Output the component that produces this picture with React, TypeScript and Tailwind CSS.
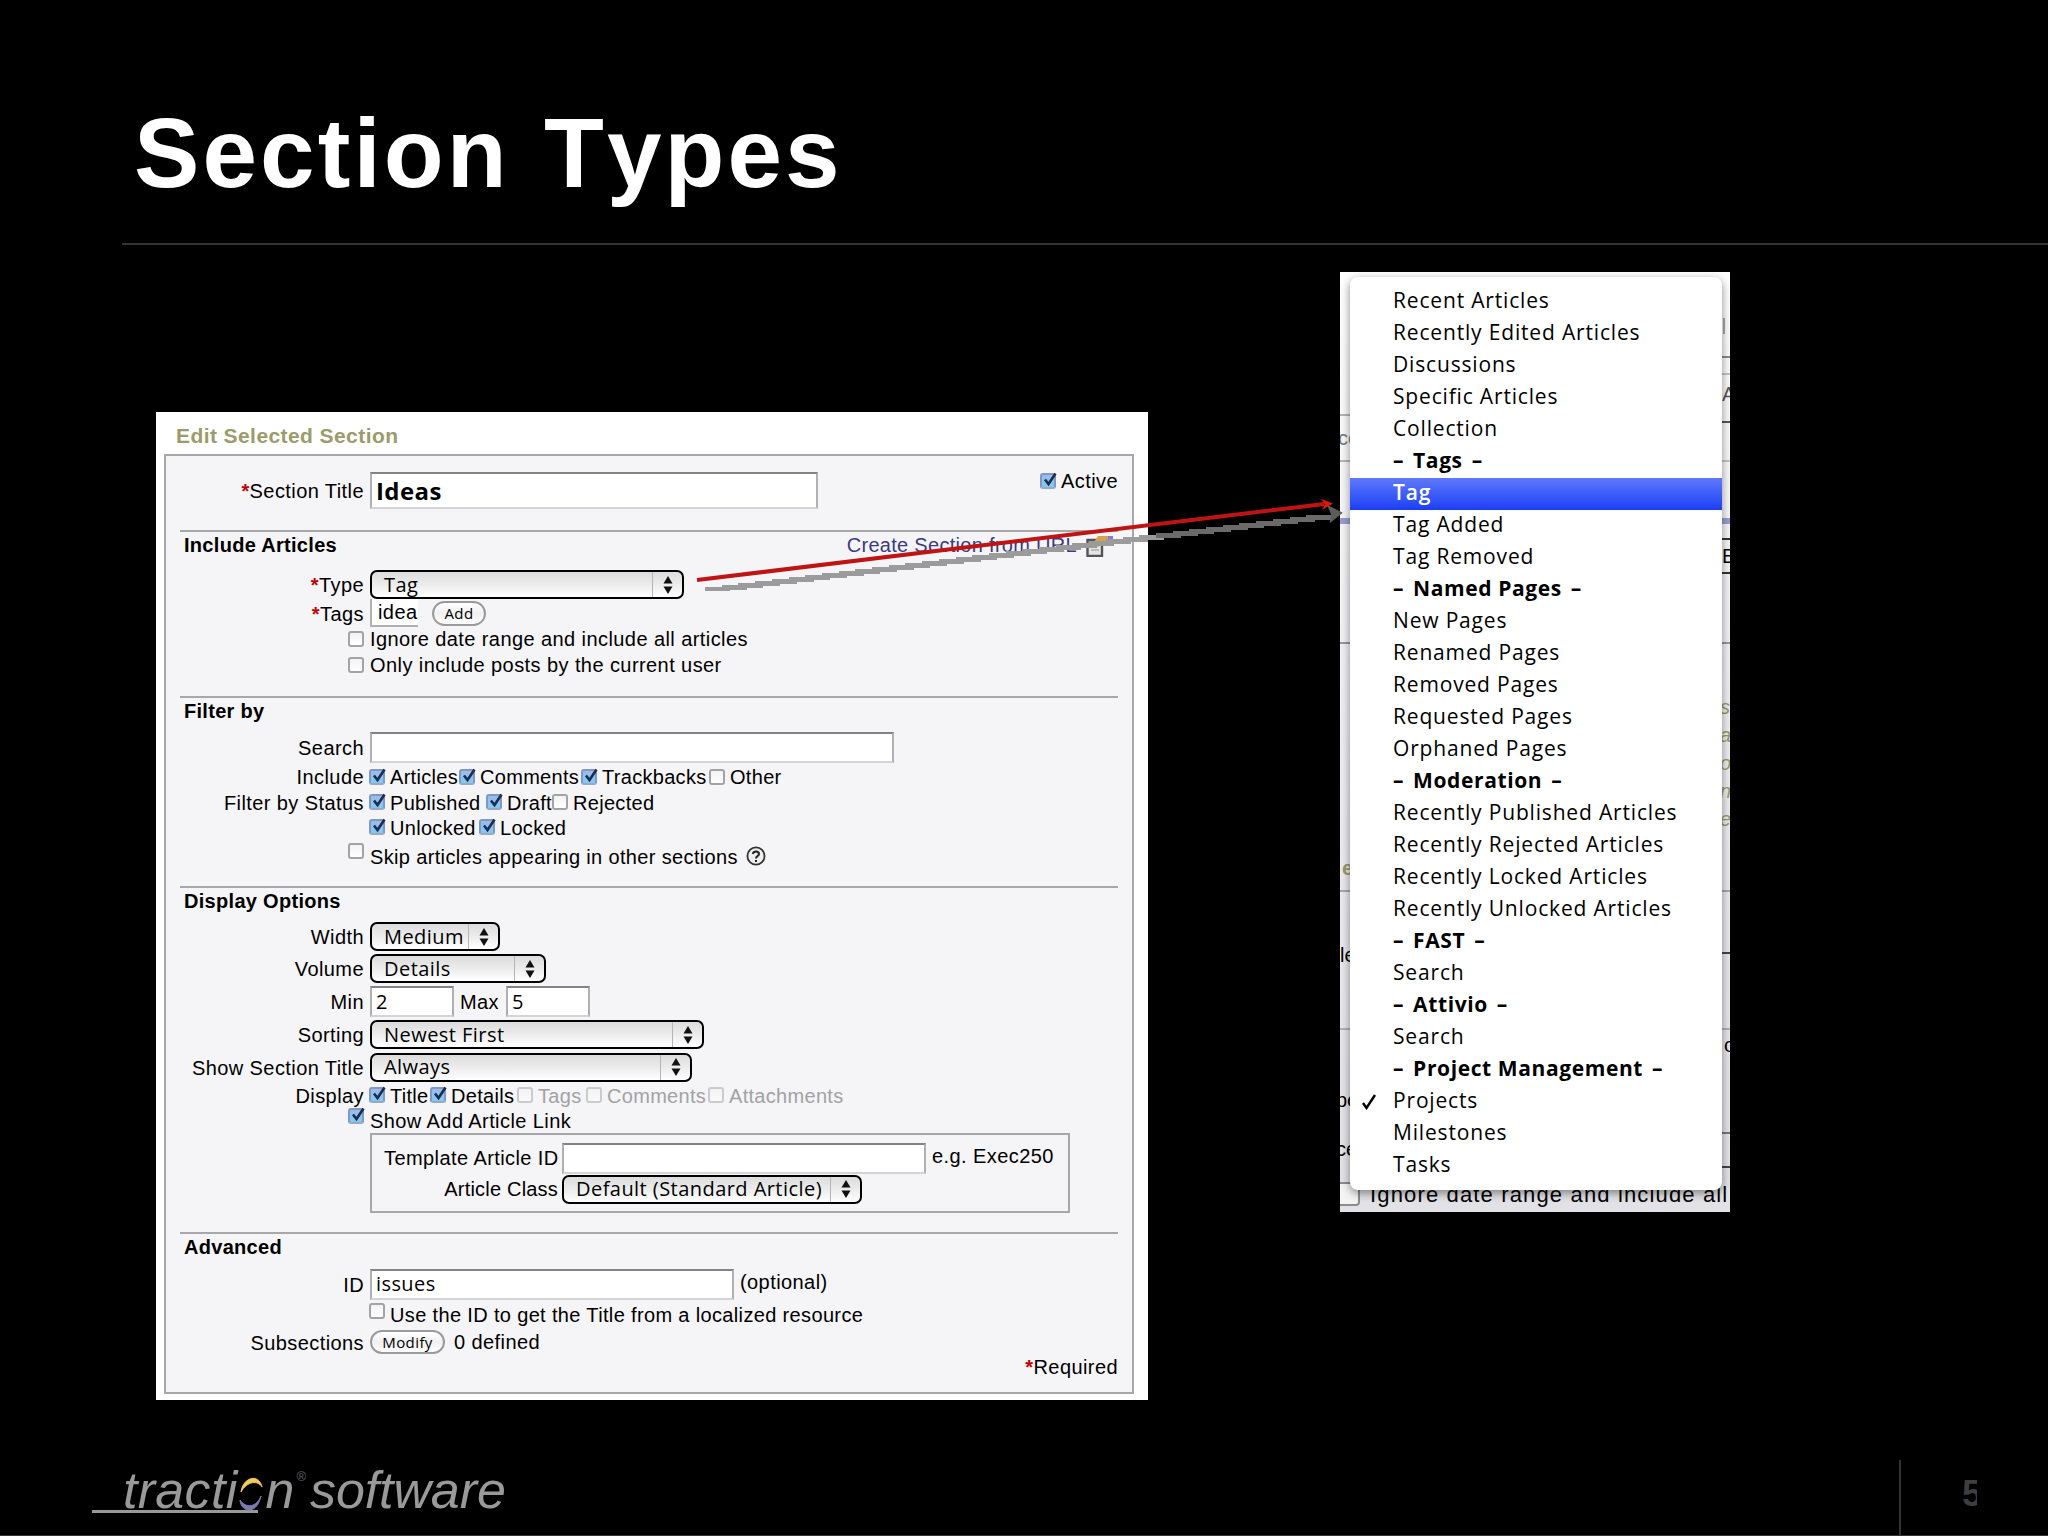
import type { ReactNode } from 'react';
import { clsx } from 'clsx';

type MenuItem = { label: string; heading?: boolean; selected?: boolean; checked?: boolean };

const menuItems: MenuItem[] = [
  { label: 'Recent Articles' },
  { label: 'Recently Edited Articles' },
  { label: 'Discussions' },
  { label: 'Specific Articles' },
  { label: 'Collection' },
  { label: 'Tags', heading: true },
  { label: 'Tag', selected: true },
  { label: 'Tag Added' },
  { label: 'Tag Removed' },
  { label: 'Named Pages', heading: true },
  { label: 'New Pages' },
  { label: 'Renamed Pages' },
  { label: 'Removed Pages' },
  { label: 'Requested Pages' },
  { label: 'Orphaned Pages' },
  { label: 'Moderation', heading: true },
  { label: 'Recently Published Articles' },
  { label: 'Recently Rejected Articles' },
  { label: 'Recently Locked Articles' },
  { label: 'Recently Unlocked Articles' },
  { label: 'FAST', heading: true },
  { label: 'Search' },
  { label: 'Attivio', heading: true },
  { label: 'Search' },
  { label: 'Project Management', heading: true },
  { label: 'Projects', checked: true },
  { label: 'Milestones' },
  { label: 'Tasks' },
];

function Checkbox({ checked, dim, className }: { checked?: boolean; dim?: boolean; className?: string }) {
  return (
    <span
      className={clsx(
        'relative block size-[16px] shrink-0 rounded-[3px] border-2',
        checked
          ? 'border-[#8197c4] border-b-[#9aa9bd] bg-linear-to-b from-[#9dbbe8] to-[#7ccbf8]'
          : 'border-[#a3a3a5] bg-linear-to-b from-[#f2f2f2] to-white',
        dim && 'opacity-50',
        className
      )}
    >
      {checked && (
        <svg viewBox="0 0 18 18" className="absolute -top-[4px] -left-[2px] size-[18px]">
          <path d="M5 8.5 L8.5 13 L15.5 2.5" fill="none" stroke="#1b2c4c" strokeWidth="2.6" />
        </svg>
      )}
    </span>
  );
}

function Check({
  label,
  checked,
  dim,
  className,
}: {
  label: string;
  checked?: boolean;
  dim?: boolean;
  className?: string;
}) {
  return (
    <span className={clsx('-ml-px flex shrink-0 items-center gap-[5px] tracking-[0.3px]', className)}>
      <Checkbox checked={checked} dim={dim} />
      <span className={clsx('mt-[2px]', dim && 'text-[#a2a2a4]')}>{label}</span>
    </span>
  );
}

function Select({ value, className }: { value: string; className?: string }) {
  return (
    <span
      className={clsx(
        'flex shrink-0 items-center rounded-[7px] border-2 border-black bg-linear-to-b from-[#dcdcdc] via-[#ececec] to-white font-["Open_Sans",sans-serif] text-[20px] leading-none tracking-[0.45px]',
        className
      )}
    >
      <span className="flex-1 pl-[12px]">{value}</span>
      <span className="flex h-full w-[30px] items-center justify-center border-l border-[#b5b5b5]">
        <svg viewBox="0 0 10 18" className="h-[18px] w-[10px]">
          <path d="M5 0 L9.5 7.5 H0.5 Z M5 18 L9.5 10.5 H0.5 Z" fill="#111" />
        </svg>
      </span>
    </span>
  );
}

function Field({ value, className }: { value?: string; className?: string }) {
  return (
    <span
      className={clsx(
        'flex shrink-0 items-center border-2 border-t-[#838385] border-r-[#b0b0b2] border-b-[#d4d4d6] border-l-[#b0b0b2] bg-white pl-[4px] font-["Open_Sans",sans-serif] leading-none',
        className
      )}
    >
      {value}
    </span>
  );
}

function Button({ label, className }: { label: string; className?: string }) {
  return (
    <span
      className={clsx(
        'flex shrink-0 items-center justify-center rounded-full border-2 border-[#9a9a9c] bg-linear-to-b from-white via-[#f0f0f0] to-white font-["Open_Sans",sans-serif] text-[15px] leading-none font-medium',
        className
      )}
    >
      {label}
    </span>
  );
}

function Row({
  label,
  required,
  className,
  children,
}: {
  label?: ReactNode;
  required?: boolean;
  className?: string;
  children?: ReactNode;
}) {
  return (
    <div className={clsx('flex items-center', className)}>
      <div className={clsx('mr-[6px] flex w-[184px] shrink-0 justify-end', typeof label === 'string' && 'mt-[2px]')}>
        {required && <Star />}
        {label}
      </div>
      {children}
    </div>
  );
}

function Star() {
  return <span className="font-bold text-[#c00000]">*</span>;
}

function Group({ title, extra, className, children }: { title: string; extra?: ReactNode; className?: string; children: ReactNode }) {
  return (
    <div className={clsx('border-t-2 border-[#a8a8aa]', className)}>
      <div className="flex h-[26px] items-center justify-between pl-1 font-bold tracking-[0.3px]">
        {title}
        {extra}
      </div>
      {children}
    </div>
  );
}

function LinkIcon() {
  return (
    <svg viewBox="0 0 32 24" className="h-[24px] w-[32px]">
      <path d="M1.500 7 H16 V23 H1.500 Z" fill="#e4e4e4" stroke="#555" strokeWidth="2.4" />
      <path d="M5 13 H13 M5 17 H13" stroke="#bbb" strokeWidth="2" />
      <path d="M8 9 L12 3 H22 V11 H16 L13 13 Z" fill="#d6a250" />
      <path d="M22 3 H27 V12 H22 Z" fill="#8c78d8" />
    </svg>
  );
}

function EditSection() {
  return (
    <section className="mt-[167px] ml-[156px] flex h-[988px] w-[992px] flex-col bg-white pr-[14px] pl-[8px] text-[20px] leading-[23px] tracking-[0.42px] whitespace-nowrap text-black">
      <h2 className="flex h-[42px] items-end pb-[7px] pl-[12px] text-[21px] leading-[23px] font-bold text-[#9b9b6b]">
        Edit Selected Section
      </h2>
      <div className="h-[940px] border-2 border-[#a8a8aa] bg-[#f5f4f6] px-[14px]">
        <Row label="Section Title" required className="h-[69px]">
          <Field value="Ideas" className="h-[37px] w-[448px] text-[24px] font-bold" />
          <span className="-mt-[20px] ml-auto flex items-center gap-[5px]">
            <Checkbox checked />
            <span className="mt-[2px]">Active</span>
          </span>
        </Row>

        <Group
          title="Include Articles"
          className="mt-[5px]"
          extra={
            <span className="flex items-center gap-[9px] font-normal text-[#3a3a85]">
              Create Section from URL
              <LinkIcon />
            </span>
          }
        >
          <Row label="Type" required className="mt-[12px] h-[29px]">
            <Select value="Tag" className="h-[29px] w-[314px]" />
          </Row>
          <Row label="Tags" required className="h-[28px]">
            <span className="flex h-[28px] w-[48px] items-center border-b-2 border-l-2 border-[#b0b0b2] bg-white pl-[6px]">
              idea
            </span>
            <Button label="Add" className="ml-[14px] h-[25px] w-[54px]" />
          </Row>
          <Row label={<Checkbox />} className="h-[24px]">
            <span className="mt-px">Ignore date range and include all articles</span>
          </Row>
          <Row label={<Checkbox />} className="h-[27px]">
            <span className="mt-[2px]">Only include posts by the current user</span>
          </Row>
        </Group>

        <Group title="Filter by" className="mt-[18px]">
          <Row label="Search" className="mt-[8px] h-[31px]">
            <Field className="h-[31px] w-[524px]" />
          </Row>
          <Row label="Include" className="h-[27px]">
            <Check label="Articles" checked className="w-[91px]" />
            <Check label="Comments" checked className="w-[123px]" />
            <Check label="Trackbacks" checked className="w-[129px]" />
            <Check label="Other" />
          </Row>
          <Row label="Filter by Status" className="h-[24px]">
            <Check label="Published" checked className="w-[118px]" />
            <Check label="Draft" checked className="w-[67px]" />
            <Check label="Rejected" />
          </Row>
          <Row className="h-[26px]">
            <Check label="Unlocked" checked className="w-[111px]" />
            <Check label="Locked" checked />
          </Row>
          <Row label={<Checkbox className="-mt-[10px]" />} className="h-[32px]">
            <span className="mt-[2px] tracking-[0.35px]">Skip articles appearing in other sections</span>
            <svg viewBox="0 0 20 20" className="ml-[8px] size-[20px]">
              <circle cx="10" cy="10" r="8.6" fill="#eee" stroke="#333" strokeWidth="1.8" />
              <path d="M7 8 C7 4.5 13 4.5 13 8 C13 10 10 10 10 12.5 M10 14 V16" fill="none" stroke="#222" strokeWidth="2" />
            </svg>
          </Row>
        </Group>

        <Group title="Display Options" className="mt-[14px]">
          <Row label="Width" className="mt-[8px] h-[29px]">
            <Select value="Medium" className="h-[29px] w-[130px]" />
          </Row>
          <Row label="Volume" className="mt-[3px] h-[29px]">
            <Select value="Details" className="h-[29px] w-[176px]" />
          </Row>
          <Row label="Min" className="mt-[3px] h-[31px]">
            <Field value="2" className="h-[31px] w-[84px] text-[20px]" />
            <span className="mt-[2px] mr-[7px] ml-[6px]">Max</span>
            <Field value="5" className="h-[31px] w-[84px] text-[20px]" />
          </Row>
          <Row label="Sorting" className="mt-[3px] h-[29px]">
            <Select value="Newest First" className="h-[29px] w-[334px]" />
          </Row>
          <Row label="Show Section Title" className="mt-[3px] h-[30px]">
            <Select value="Always" className="h-[29px] w-[322px]" />
          </Row>
          <Row label="Display" className="h-[26px]">
            <Check label="Title" checked className="w-[62px]" />
            <Check label="Details" checked className="w-[88px]" />
            <Check label="Tags" dim className="w-[70px]" />
            <Check label="Comments" dim className="w-[123px]" />
            <Check label="Attachments" dim />
          </Row>
          <Row label={<Checkbox checked className="-mt-[9px]" />} className="h-[24px]">
            <span className="mt-[2px]">Show Add Article Link</span>
          </Row>
          <div className="mt-[1px] ml-[190px] h-[80px] w-[700px] border-2 border-[#a8a8aa] pt-[8px] pl-[12px]">
            <div className="flex h-[31px] items-center">
              <span className="mr-[4px] w-[174px] text-right">Template Article ID</span>
              <Field className="h-[31px] w-[364px]" />
              <span className="-mt-[5px] ml-[6px]">e.g. Exec250</span>
            </div>
            <div className="flex h-[30px] items-center">
              <span className="mr-[4px] w-[174px] text-right tracking-[0.2px]">Article Class</span>
              <Select value="Default (Standard Article)" className="h-[29px] w-[300px]" />
            </div>
          </div>
        </Group>

        <Group title="Advanced" className="mt-[19px]">
          <Row label="ID" className="mt-[9px] h-[30px]">
            <Field value="issues" className="h-[31px] w-[364px] text-[20px]" />
            <span className="-mt-[3px] ml-[6px]">(optional)</span>
          </Row>
          <Row className="h-[31px]">
            <Checkbox className="-mt-[8px] -ml-px" />
            <span className="mt-[2px] ml-[5px] tracking-[0.35px]">
              Use the ID to get the Title from a localized resource
            </span>
          </Row>
          <Row label="Subsections" className="h-[24px]">
            <Button label="Modify" className="h-[24px] w-[75px]" />
            <span className="ml-[9px]">0 defined</span>
          </Row>
          <div className="flex h-[26px] items-center justify-end">
            <Star />
            Required
          </div>
        </Group>
      </div>
    </section>
  );
}

// bits of the page that stay visible around the open menu
function PageBehindMenu() {
  return (
    <div className="absolute inset-0 bg-linear-to-b from-white via-[#eeedf1] to-[#e2e2e6] text-[20px] leading-[23px] whitespace-nowrap text-black">
      <span className="absolute top-[142px] left-0 h-[2px] w-[10px] bg-[#b5b5b8]" />
      <span className="absolute top-[155px] -left-[2px] text-[#777]">ce</span>
      <span className="absolute top-[188px] left-0 h-[2px] w-[10px] bg-[#b5b5b8]" />
      <span className="absolute top-[246px] left-0 h-[6px] w-full bg-[#9c9cd0]" />
      <span className="absolute top-[370px] left-0 h-[2px] w-full bg-[#98989a]" />
      <span className="absolute top-[585px] left-[2px] font-bold text-[#9b9b6b]">e</span>
      <span className="absolute top-[618px] left-0 h-[2px] w-full bg-[#a8a8aa]" />
      <span className="absolute top-[672px] left-0">le</span>
      <span className="absolute top-[756px] left-0 h-[2px] w-full bg-[#b0b0b2]" />
      <span className="absolute top-[817px] -left-[4px]">pe</span>
      <span className="absolute top-[866px] -left-[4px]">ce</span>
      <span className="absolute top-[910px] -left-[4px] h-[24px] w-[24px] rounded-[4px] border-2 border-[#8d8d8f] bg-[#f4f4f4]" />

      <span className="absolute top-[46px] right-[5px] h-[16px] w-[2px] bg-[#aaa]" />
      <span className="absolute top-[84px] right-0 h-[2px] w-[8px] bg-[#8a8a8c]" />
      <span className="absolute top-[101px] right-0 h-[2px] w-[8px] bg-[#c4c4c6]" />
      <span className="absolute top-[111px] left-[382px] text-[#555]">A</span>
      <span className="absolute top-[149px] right-0 h-[2px] w-[8px] bg-[#555]" />
      <span className="absolute top-[188px] right-0 h-[2px] w-[8px] bg-[#c4c4c6]" />
      <span className="absolute top-[266px] right-0 h-[2px] w-[8px] bg-[#333]" />
      <span className="absolute top-[273px] left-[382px]">E</span>
      <span className="absolute top-[300px] right-0 h-[2px] w-[8px] bg-[#333]" />
      <span className="absolute top-[424px] left-[380px] text-[#9b9b6b] italic">s</span>
      <span className="absolute top-[452px] left-[380px] text-[#9b9b6b] italic">a</span>
      <span className="absolute top-[480px] left-[380px] text-[#9b9b6b] italic">o</span>
      <span className="absolute top-[508px] left-[380px] text-[#9b9b6b] italic">n</span>
      <span className="absolute top-[536px] left-[380px] text-[#9b9b6b] italic">e</span>
      <span className="absolute top-[680px] right-0 h-[2px] w-[8px] bg-[#444]" />
      <span className="absolute top-[762px] left-[384px]">o</span>
      <span className="absolute top-[860px] right-0 h-[2px] w-[8px] bg-[#777]" />
      <span className="absolute top-[894px] right-0 h-[2px] w-[8px] bg-[#444]" />
      <span className="absolute top-[910px] left-[30px] text-[22px] leading-[25px] tracking-[1.15px]">
        Ignore date range and include all
      </span>
    </div>
  );
}

function TypeMenu() {
  return (
    <section className="relative mt-[27px] ml-[192px] h-[940px] w-[390px] overflow-hidden pt-[5px] pl-[10px]">
      <PageBehindMenu />
      <ul className="relative h-[913px] w-[372px] rounded-[8px] bg-white pt-[9px] font-['Open_Sans',sans-serif] text-[21px] tracking-[0.83px] whitespace-nowrap text-black shadow-[0_3px_10px_rgba(0,0,0,0.45)]">
        {menuItems.map((item, i) => (
          <li
            key={i}
            className={clsx(
              'flex h-[32px] items-center pb-[4px] leading-none',
              item.heading && 'font-bold tracking-[0.6px]',
              item.selected && 'bg-linear-to-b from-[#6078fb] to-[#1c3cf4] font-semibold text-white'
            )}
          >
            <span className="flex w-[43px] justify-center pr-[6px]">
              {item.checked && (
                <svg viewBox="0 0 14 16" className="mt-[3px] h-[16px] w-[14px]">
                  <path d="M1 9 L4.5 14 L13 1" fill="none" stroke="#000" strokeWidth="2.4" />
                </svg>
              )}
            </span>
            {item.heading ? (
              <span className="flex gap-[9px]">
                <span>–</span>
                <span>{item.label}</span>
                <span>–</span>
              </span>
            ) : (
              item.label
            )}
          </li>
        ))}
      </ul>
    </section>
  );
}

// the arrow's shadow is a staircase: 2px up for every 16.7px across
const shadowSteps = Array.from({ length: 37 }, (_, i) => ({ x: 705 + i * 16.7, y: 587 - i * 2 }));

function Arrows() {
  return (
    <svg viewBox="0 0 2048 1536" className="pointer-events-none absolute inset-0 h-full w-full">
      <g shapeRendering="crispEdges">
        {shadowSteps.map(({ x, y }) => (
          <rect key={x} x={x} y={y} width="25" height={x < 710 ? 4 : 5} fill={x < 1145 ? '#9b9b9b' : '#6a6a6a'} />
        ))}
      </g>
      <path d="M1329 507 L1341 513 L1331 521 L1332 514 Z" fill="#5c5c5c" stroke="#5c5c5c" strokeWidth="2" />
      <path d="M697 580 L1324 504" stroke="#c01414" strokeWidth="4" />
      <path d="M1321 499 L1333 503.500 L1322 510 L1325 504.500 Z" fill="#e01808" />
    </svg>
  );
}

function Logo() {
  return (
    <div className="ml-[92px] flex h-[53px] w-[166px] items-end border-b-3 border-[#999] pl-[31px] text-[52px] leading-[40px] whitespace-nowrap text-[#999] italic">
      <span className="tracking-[0.3px]">tracti</span>
      <svg viewBox="0 0 24 36" className="mb-[-2px] ml-[2px] h-[36px] w-[24px] shrink-0">
        <path d="M2 16 C4 1 20 -3 23 11 C19 4 8 5 2 16 Z" fill="#f5c95c" stroke="#f5c95c" />
        <path d="M1 24 C2 37 18 39 22 20 C18 31 7 33 1 24 Z" fill="#7f79b4" stroke="#7f79b4" />
      </svg>
      <span className="ml-[2px]">n</span>
      <span className="mb-[27px] ml-[2px] text-[13px] leading-none text-[#666] not-italic">®</span>
      <span className="ml-[4px] tracking-[-0.1px]">software</span>
    </div>
  );
}

export default function App() {
  return (
    <div className="relative flex h-[1536px] w-[2048px] flex-col overflow-hidden bg-black font-['Liberation_Sans',Arial,sans-serif]">
      <header className="flex h-[245px] flex-col pl-[122px]">
        <h1 className="h-[243px] pt-[93px] pl-[12px] text-[98px] leading-[120px] font-bold tracking-[3.1px] text-white [font-kerning:none] [word-spacing:4px]">
          Section Types
        </h1>
        <div className="h-[2px] shrink-0 bg-[#333]" />
      </header>
      <main className="flex h-[1215px] items-start">
        <EditSection />
        <TypeMenu />
      </main>
      <footer className="flex h-[76px] items-start justify-between border-b border-[#333]">
        <Logo />
        <div className="flex h-[75px] w-[149px] border-l-2 border-[#333] pt-[16px] pl-[61px]">
          <span className="h-[36px] w-[15px] overflow-hidden text-[36px] leading-[36px] font-bold text-[#3e3e3e]">5</span>
        </div>
      </footer>
      <Arrows />
    </div>
  );
}
